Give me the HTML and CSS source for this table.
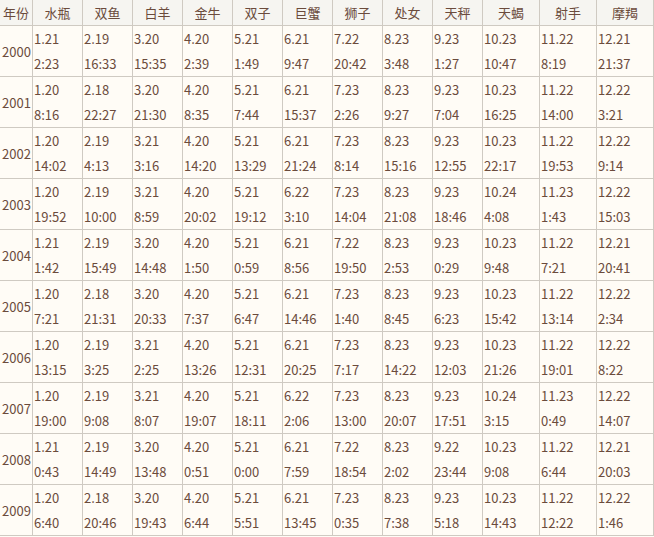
FILE: index.html
```html
<!DOCTYPE html>
<html lang="zh">
<head>
<meta charset="utf-8">
<link rel="stylesheet" href="styles.css">
</head>
<body>
<table class="zodiac">
<colgroup>
<col class="c-year"><col class="c-n"><col class="c-n"><col class="c-n"><col class="c-n"><col class="c-n"><col class="c-n"><col class="c-n"><col class="c-n"><col class="c-n"><col class="c-w"><col class="c-w"><col class="c-w">
</colgroup>
<thead>
<tr><th>年份</th><th>水瓶</th><th>双鱼</th><th>白羊</th><th>金牛</th><th>双子</th><th>巨蟹</th><th>狮子</th><th>处女</th><th>天秤</th><th>天蝎</th><th>射手</th><th>摩羯</th></tr>
</thead>
<tbody>
<tr><td class="y">2000</td><td>1.21<br>2:23</td><td>2.19<br>16:33</td><td>3.20<br>15:35</td><td>4.20<br>2:39</td><td>5.21<br>1:49</td><td>6.21<br>9:47</td><td>7.22<br>20:42</td><td>8.23<br>3:48</td><td>9.23<br>1:27</td><td>10.23<br>10:47</td><td>11.22<br>8:19</td><td>12.21<br>21:37</td></tr>
<tr><td class="y">2001</td><td>1.20<br>8:16</td><td>2.18<br>22:27</td><td>3.20<br>21:30</td><td>4.20<br>8:35</td><td>5.21<br>7:44</td><td>6.21<br>15:37</td><td>7.23<br>2:26</td><td>8.23<br>9:27</td><td>9.23<br>7:04</td><td>10.23<br>16:25</td><td>11.22<br>14:00</td><td>12.22<br>3:21</td></tr>
<tr><td class="y">2002</td><td>1.20<br>14:02</td><td>2.19<br>4:13</td><td>3.21<br>3:16</td><td>4.20<br>14:20</td><td>5.21<br>13:29</td><td>6.21<br>21:24</td><td>7.23<br>8:14</td><td>8.23<br>15:16</td><td>9.23<br>12:55</td><td>10.23<br>22:17</td><td>11.22<br>19:53</td><td>12.22<br>9:14</td></tr>
<tr><td class="y">2003</td><td>1.20<br>19:52</td><td>2.19<br>10:00</td><td>3.21<br>8:59</td><td>4.20<br>20:02</td><td>5.21<br>19:12</td><td>6.22<br>3:10</td><td>7.23<br>14:04</td><td>8.23<br>21:08</td><td>9.23<br>18:46</td><td>10.24<br>4:08</td><td>11.23<br>1:43</td><td>12.22<br>15:03</td></tr>
<tr><td class="y">2004</td><td>1.21<br>1:42</td><td>2.19<br>15:49</td><td>3.20<br>14:48</td><td>4.20<br>1:50</td><td>5.21<br>0:59</td><td>6.21<br>8:56</td><td>7.22<br>19:50</td><td>8.23<br>2:53</td><td>9.23<br>0:29</td><td>10.23<br>9:48</td><td>11.22<br>7:21</td><td>12.21<br>20:41</td></tr>
<tr><td class="y">2005</td><td>1.20<br>7:21</td><td>2.18<br>21:31</td><td>3.20<br>20:33</td><td>4.20<br>7:37</td><td>5.21<br>6:47</td><td>6.21<br>14:46</td><td>7.23<br>1:40</td><td>8.23<br>8:45</td><td>9.23<br>6:23</td><td>10.23<br>15:42</td><td>11.22<br>13:14</td><td>12.22<br>2:34</td></tr>
<tr><td class="y">2006</td><td>1.20<br>13:15</td><td>2.19<br>3:25</td><td>3.21<br>2:25</td><td>4.20<br>13:26</td><td>5.21<br>12:31</td><td>6.21<br>20:25</td><td>7.23<br>7:17</td><td>8.23<br>14:22</td><td>9.23<br>12:03</td><td>10.23<br>21:26</td><td>11.22<br>19:01</td><td>12.22<br>8:22</td></tr>
<tr><td class="y">2007</td><td>1.20<br>19:00</td><td>2.19<br>9:08</td><td>3.21<br>8:07</td><td>4.20<br>19:07</td><td>5.21<br>18:11</td><td>6.22<br>2:06</td><td>7.23<br>13:00</td><td>8.23<br>20:07</td><td>9.23<br>17:51</td><td>10.24<br>3:15</td><td>11.23<br>0:49</td><td>12.22<br>14:07</td></tr>
<tr><td class="y">2008</td><td>1.21<br>0:43</td><td>2.19<br>14:49</td><td>3.20<br>13:48</td><td>4.20<br>0:51</td><td>5.21<br>0:00</td><td>6.21<br>7:59</td><td>7.22<br>18:54</td><td>8.23<br>2:02</td><td>9.22<br>23:44</td><td>10.23<br>9:08</td><td>11.22<br>6:44</td><td>12.21<br>20:03</td></tr>
<tr><td class="y">2009</td><td>1.20<br>6:40</td><td>2.18<br>20:46</td><td>3.20<br>19:43</td><td>4.20<br>6:44</td><td>5.21<br>5:51</td><td>6.21<br>13:45</td><td>7.23<br>0:35</td><td>8.23<br>7:38</td><td>9.23<br>5:18</td><td>10.23<br>14:43</td><td>11.22<br>12:22</td><td>12.22<br>1:46</td></tr>
</tbody>
</table>
</body>
</html>
```
FILE: styles.css
```css
html, body {
  margin: 0;
  padding: 0;
  background: #fffcf6;
}

.zodiac {
  width: 654px;
  table-layout: fixed;
  border-collapse: separate;
  border-spacing: 0;
  font-family: "Microsoft YaHei", "Noto Sans CJK SC", "Noto Sans", sans-serif;
  font-size: 13px;
  color: #6b4b3c;
}

.c-year { width: 33px; }
.c-n { width: 50px; }
.c-w { width: 57px; }

.zodiac th,
.zodiac td {
  padding: 0;
  border-right: 1px solid #cfcac2;
  border-bottom: 1px solid #cfcac2;
  box-sizing: border-box;
  overflow: hidden;
  white-space: nowrap;
}

.zodiac th {
  height: 26px;
  line-height: 25px;
  font-weight: normal;
  text-align: center;
  background: #f6f5f1;
}

.zodiac td {
  height: 51px;
  line-height: 25px;
  text-align: left;
  vertical-align: middle;
  background: #fffcf6;
  padding-left: 1px;
}

.zodiac td.y {
  padding-left: 2px;
}
```
